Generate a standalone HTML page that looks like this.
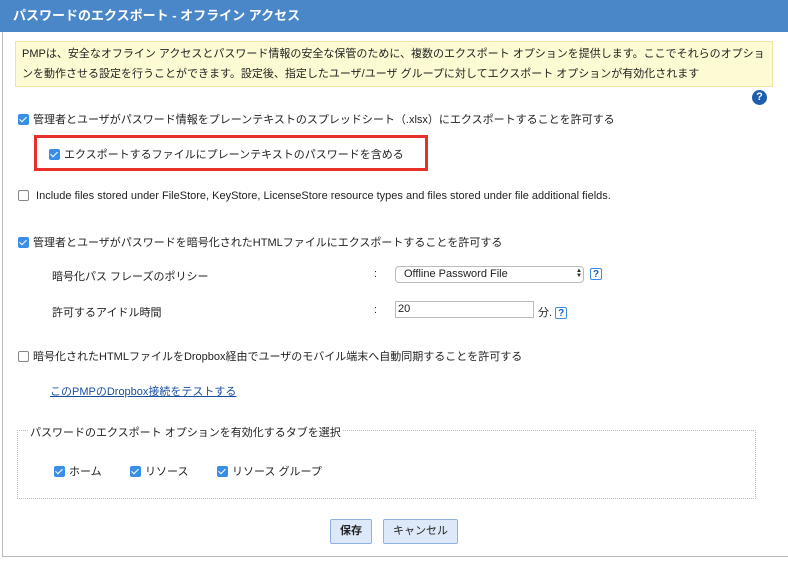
<!DOCTYPE html>
<html><head><meta charset="utf-8"><style>
body{margin:0;width:788px;height:561px;background:#fff;font-family:"Liberation Sans","Noto Sans CJK JP",sans-serif;font-size:11px;color:#222;position:relative;overflow:hidden}
.a{position:absolute;white-space:nowrap}
.hdr{position:absolute;left:0;top:0;width:788px;height:32px;background:#4a87c8;color:#fff;font-size:13px;font-weight:bold;line-height:32px;padding-left:13px;box-sizing:border-box}
.frame{position:absolute;left:2px;top:32px;width:786px;height:525px;border-left:1px solid #bbb;border-bottom:1px solid #bbb;box-sizing:border-box}
.note{position:absolute;left:15px;top:41px;width:758px;height:46px;background:#fdfbd3;border:1px solid #eee6a0;box-sizing:border-box;line-height:20px;padding:2px 6px;font-size:11px}
.cb{display:inline-block;width:11px;height:11px;background:#3b8ee8;border-radius:2px;vertical-align:-2px;margin-right:4px;position:relative}
.cb:after{content:"";position:absolute;left:3px;top:1px;width:3px;height:6px;border:solid #fff;border-width:0 1.5px 1.5px 0;transform:rotate(45deg)}
.ub{display:inline-block;width:11px;height:11px;border:1px solid #888;border-radius:2px;box-sizing:border-box;vertical-align:-2px;margin-right:4px;background:#fff}
.q{display:inline-block;width:12px;height:12px;border:1px solid #3b8ee8;border-radius:2px;color:#1a5fc0;font-weight:bold;font-size:10px;line-height:12px;text-align:center;box-sizing:border-box}
.btn{position:absolute;top:519px;height:25px;background:#dde9f8;border:1px solid #8fb3e0;border-radius:2px;box-sizing:border-box;text-align:center;line-height:23px;font-size:11px}
</style></head><body>
<div class="hdr">パスワードのエクスポート - オフライン アクセス</div>
<div class="frame"></div>
<div class="note">PMPは、安全なオフライン アクセスとパスワード情報の安全な保管のために、複数のエクスポート オプションを提供します。ここでそれらのオプションを動作させる設定を行うことができます。設定後、指定したユーザ/ユーザ グループに対してエクスポート オプションが有効化されます</div>
<div class="a" style="left:752px;top:90px;width:15px;height:15px;border-radius:50%;background:#1e5fad;color:#fff;font-weight:bold;font-size:11px;text-align:center;line-height:15px">?</div>
<div class="a" style="left:18px;top:111px"><span class="cb"></span>管理者とユーザがパスワード情報をプレーンテキストのスプレッドシート（.xlsx）にエクスポートすることを許可する</div>
<div class="a" style="left:34px;top:135px;width:394px;height:36px;border:3px solid #e8302a;box-sizing:border-box"></div>
<div class="a" style="left:49px;top:146px"><span class="cb"></span>エクスポートするファイルにプレーンテキストのパスワードを含める</div>
<div class="a" style="left:18px;top:190px"><span class="ub"></span> Include files stored under FileStore, KeyStore, LicenseStore resource types and files stored under file additional fields.</div>
<div class="a" style="left:18px;top:234px"><span class="cb"></span>管理者とユーザがパスワードを暗号化されたHTMLファイルにエクスポートすることを許可する</div>
<div class="a" style="left:52px;top:268px">暗号化パス フレーズのポリシー</div>
<div class="a" style="left:374px;top:268px">:</div>
<div class="a" style="left:395px;top:266px;width:189px;height:17px;border:1px solid #bbb;border-radius:4px;box-sizing:border-box;line-height:15px;padding-left:8px">Offline Password File</div>
<div class="a" style="left:576px;top:269px;font-size:6px;line-height:5px">▲<br>▼</div>
<div class="a" style="left:590px;top:268px"><span class="q">?</span></div>
<div class="a" style="left:52px;top:304px">許可するアイドル時間</div>
<div class="a" style="left:374px;top:304px">:</div>
<div class="a" style="left:395px;top:301px;width:139px;height:17px;border:1px solid #bbb;box-sizing:border-box;line-height:15px;padding-left:2px">20</div>
<div class="a" style="left:538px;top:304px">分. <span class="q">?</span></div>
<div class="a" style="left:18px;top:348px"><span class="ub"></span>暗号化されたHTMLファイルをDropbox経由でユーザのモバイル端末へ自動同期することを許可する</div>
<div class="a" style="left:50px;top:383px;color:#1a4fa0;text-decoration:underline">このPMPのDropbox接続をテストする</div>
<div class="a" style="left:17px;top:430px;width:739px;height:69px;border:1px dotted #bbb;box-sizing:border-box"></div>
<div class="a" style="left:28px;top:424px;background:#fff;padding:0 2px">パスワードのエクスポート オプションを有効化するタブを選択</div>
<div class="a" style="left:54px;top:463px"><span class="cb"></span>ホーム</div>
<div class="a" style="left:130px;top:463px"><span class="cb"></span>リソース</div>
<div class="a" style="left:217px;top:463px"><span class="cb"></span>リソース グループ</div>
<div class="btn" style="left:330px;width:42px;font-weight:bold">保存</div>
<div class="btn" style="left:383px;width:75px">キャンセル</div>
</body></html>
